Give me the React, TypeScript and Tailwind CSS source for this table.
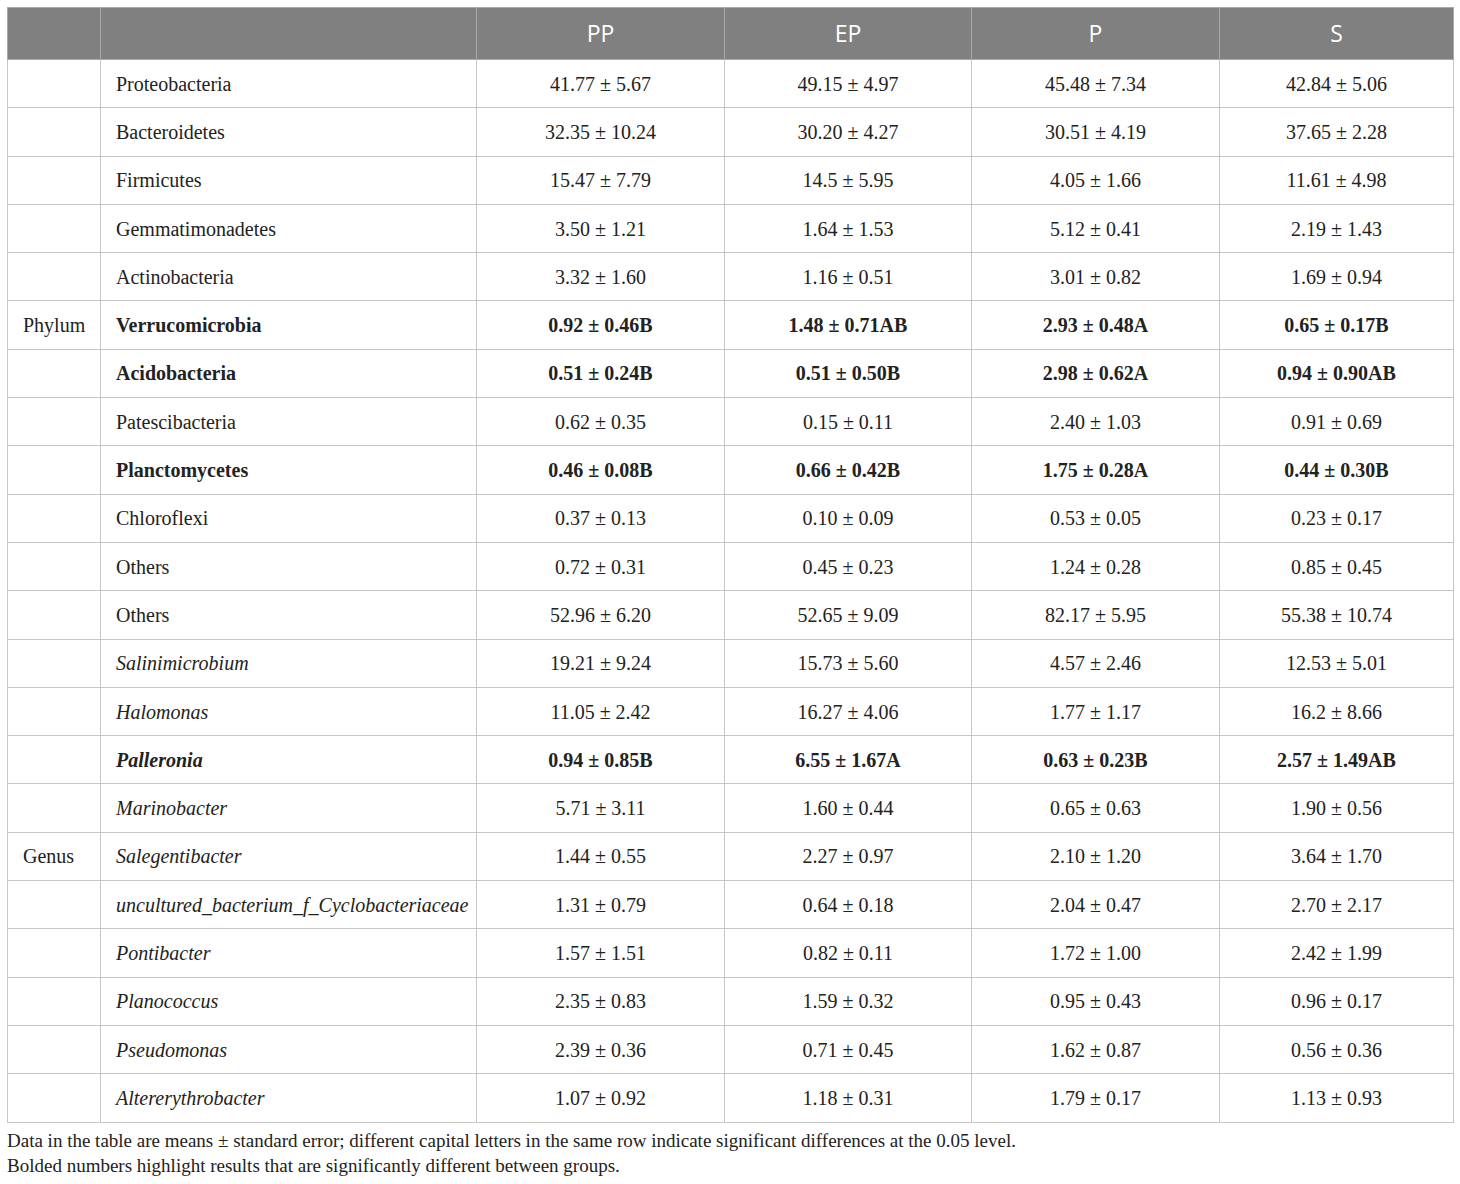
const rows: { group?: string; name: string; style?: "b" | "i" | "bi"; values: string[] }[] = [
  { name: "Proteobacteria", values: ["41.77 ± 5.67", "49.15 ± 4.97", "45.48 ± 7.34", "42.84 ± 5.06"] },
  { name: "Bacteroidetes", values: ["32.35 ± 10.24", "30.20 ± 4.27", "30.51 ± 4.19", "37.65 ± 2.28"] },
  { name: "Firmicutes", values: ["15.47 ± 7.79", "14.5 ± 5.95", "4.05 ± 1.66", "11.61 ± 4.98"] },
  { name: "Gemmatimonadetes", values: ["3.50 ± 1.21", "1.64 ± 1.53", "5.12 ± 0.41", "2.19 ± 1.43"] },
  { name: "Actinobacteria", values: ["3.32 ± 1.60", "1.16 ± 0.51", "3.01 ± 0.82", "1.69 ± 0.94"] },
  { group: "Phylum", name: "Verrucomicrobia", style: "b", values: ["0.92 ± 0.46B", "1.48 ± 0.71AB", "2.93 ± 0.48A", "0.65 ± 0.17B"] },
  { name: "Acidobacteria", style: "b", values: ["0.51 ± 0.24B", "0.51 ± 0.50B", "2.98 ± 0.62A", "0.94 ± 0.90AB"] },
  { name: "Patescibacteria", values: ["0.62 ± 0.35", "0.15 ± 0.11", "2.40 ± 1.03", "0.91 ± 0.69"] },
  { name: "Planctomycetes", style: "b", values: ["0.46 ± 0.08B", "0.66 ± 0.42B", "1.75 ± 0.28A", "0.44 ± 0.30B"] },
  { name: "Chloroflexi", values: ["0.37 ± 0.13", "0.10 ± 0.09", "0.53 ± 0.05", "0.23 ± 0.17"] },
  { name: "Others", values: ["0.72 ± 0.31", "0.45 ± 0.23", "1.24 ± 0.28", "0.85 ± 0.45"] },
  { name: "Others", values: ["52.96 ± 6.20", "52.65 ± 9.09", "82.17 ± 5.95", "55.38 ± 10.74"] },
  { name: "Salinimicrobium", style: "i", values: ["19.21 ± 9.24", "15.73 ± 5.60", "4.57 ± 2.46", "12.53 ± 5.01"] },
  { name: "Halomonas", style: "i", values: ["11.05 ± 2.42", "16.27 ± 4.06", "1.77 ± 1.17", "16.2 ± 8.66"] },
  { name: "Palleronia", style: "bi", values: ["0.94 ± 0.85B", "6.55 ± 1.67A", "0.63 ± 0.23B", "2.57 ± 1.49AB"] },
  { name: "Marinobacter", style: "i", values: ["5.71 ± 3.11", "1.60 ± 0.44", "0.65 ± 0.63", "1.90 ± 0.56"] },
  { group: "Genus", name: "Salegentibacter", style: "i", values: ["1.44 ± 0.55", "2.27 ± 0.97", "2.10 ± 1.20", "3.64 ± 1.70"] },
  { name: "uncultured_bacterium_f_Cyclobacteriaceae", style: "i", values: ["1.31 ± 0.79", "0.64 ± 0.18", "2.04 ± 0.47", "2.70 ± 2.17"] },
  { name: "Pontibacter", style: "i", values: ["1.57 ± 1.51", "0.82 ± 0.11", "1.72 ± 1.00", "2.42 ± 1.99"] },
  { name: "Planococcus", style: "i", values: ["2.35 ± 0.83", "1.59 ± 0.32", "0.95 ± 0.43", "0.96 ± 0.17"] },
  { name: "Pseudomonas", style: "i", values: ["2.39 ± 0.36", "0.71 ± 0.45", "1.62 ± 0.87", "0.56 ± 0.36"] },
  { name: "Altererythrobacter", style: "i", values: ["1.07 ± 0.92", "1.18 ± 0.31", "1.79 ± 0.17", "1.13 ± 0.93"] },
];

const headers = ["PP", "EP", "P", "S"];

export default function App() {
  return (
    <div className="w-[1460px] h-[1184px] bg-white pt-[7px] pl-[7px] font-['Liberation_Serif',serif] text-[#222]">
      <table className="w-[1446px] border-collapse table-fixed border border-[#c6c6c6]">
        <colgroup>
          <col className="w-[93px]" />
          <col className="w-[376px]" />
          <col className="w-[248px]" />
          <col className="w-[247px]" />
          <col className="w-[248px]" />
          <col className="w-[234px]" />
        </colgroup>
        <thead>
          <tr className="bg-[#7f807f] h-[52px]">
            <th className="border border-[#a9a9a9]" />
            <th className="border border-[#a9a9a9]" />
            {headers.map((h) => (
              <th
                key={h}
                className="border border-[#a9a9a9] text-white font-normal text-[23px] font-['Open_Sans',sans-serif] text-center"
              >
                {h}
              </th>
            ))}
          </tr>
        </thead>
        <tbody>
          {rows.map((r, i) => {
            const bold = r.style === "b" || r.style === "bi";
            const italic = r.style === "i" || r.style === "bi";
            return (
              <tr key={i} className="h-[48.3px]">
                <td className="border border-[#c6c6c6] pl-[15px] text-[20px]">{r.group}</td>
                <td
                  className={`border border-[#c6c6c6] pl-[15px] text-[20px] ${bold ? "font-bold" : ""} ${italic ? "italic" : ""}`}
                >
                  {r.name}
                </td>
                {r.values.map((v, j) => (
                  <td
                    key={j}
                    className={`border border-[#c6c6c6] text-center text-[20px] ${bold ? "font-bold" : ""}`}
                  >
                    {v}
                  </td>
                ))}
              </tr>
            );
          })}
        </tbody>
      </table>
      <div className="mt-[5px] text-[19px] leading-[25px] text-[#222]">
        <p>
          Data in the table are means ± standard error; different capital letters in the same row indicate significant
          differences at the 0.05 level.
        </p>
        <p>Bolded numbers highlight results that are significantly different between groups.</p>
      </div>
    </div>
  );
}
